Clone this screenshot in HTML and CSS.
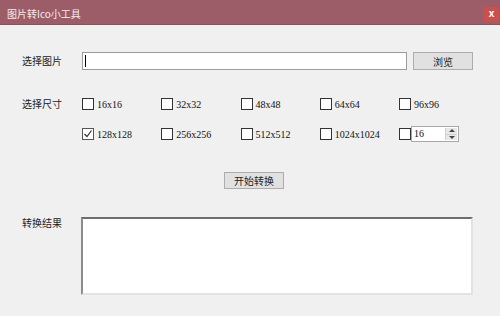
FILE: index.html
```html
<!DOCTYPE html>
<html lang="zh-CN">
<head>
<meta charset="UTF-8">
<meta name="viewport" content="width=device-width, initial-scale=1.0">
<title>图片转Ico小工具</title>
<link rel="stylesheet" href="styles.css">
</head>
<body>

<div class="window">
  <!-- Title bar -->
  <header class="titlebar">
    <span class="title">图片转Ico小工具</span>
    <span class="close">x</span>
  </header>

  <main class="content">
    <div class="row row-file">
      <span class="label">选择图片</span>
      <div class="path"><span class="caret"></span></div>
      <button class="btn btn-browse">浏览</button>
    </div>

    <div class="row row-sizes">
      <span class="label">选择尺寸</span>
      <div class="sizes">
        <label class="size"><span class="box"></span>16x16</label>
        <label class="size"><span class="box"></span>32x32</label>
        <label class="size"><span class="box"></span>48x48</label>
        <label class="size"><span class="box"></span>64x64</label>
        <label class="size"><span class="box"></span>96x96</label>
        <label class="size"><span class="box checked"><svg width="10" height="10" viewBox="0 0 10 10"><polyline points="1.5,5 4,7.5 8.5,1.5" fill="none" stroke="#333" stroke-width="1.2"/></svg></span>128x128</label>
        <label class="size"><span class="box"></span>256x256</label>
        <label class="size"><span class="box"></span>512x512</label>
        <label class="size"><span class="box"></span>1024x1024</label>
        <div class="size">
          <span class="box"></span>
          <div class="spin">
            <span class="spin-value">16</span>
            <span class="spin-arrows">
              <span class="arrow up"></span>
              <span class="arrow down"></span>
            </span>
          </div>
        </div>
      </div>
    </div>

    <div class="row-action">
      <button class="btn btn-start">开始转换</button>
    </div>

    <div class="row row-result">
      <span class="label">转换结果</span>
      <div class="result"></div>
    </div>
  </main>
</div>

</body>
</html>
```

FILE: styles.css
```css
/* Small WinForms-like tool window */
body {
  margin: 0;
  padding: 0;
  background-color: #f0f0f0;
  font-family: "Noto Sans CJK SC", "Liberation Sans", sans-serif;
  font-size: 10px;
  color: #222;
}
.window {
  width: 500px;
  height: 316px;
  overflow: hidden;
}
.titlebar {
  height: 24px;
  display: flex;
  align-items: center;
  justify-content: space-between;
  padding: 0 1px 0 7px;
  background-color: #9c5c68;
  border-bottom: 1px solid #8e4f5b;
}
.title {
  color: #f6eef0;
  font-size: 10px;
  line-height: 12px;
  margin-top: 3px;
}
.close {
  align-self: flex-start;
  width: 15px;
  height: 15px;
  margin-top: 7px;
  background-color: #c8504f;
  color: #fff;
  font-family: "Liberation Sans", sans-serif;
  font-weight: bold;
  font-size: 10px;
  line-height: 14px;
  text-align: center;
}
.content {
  padding: 27px 0 0 22px;
}
.row {
  display: flex;
  align-items: center;
}
.label {
  width: 60px;
  flex: none;
  line-height: 16px;
}
.path {
  width: 325px;
  height: 18px;
  box-sizing: border-box;
  border: 1px solid #9c9c9c;
  background-color: #fff;
  display: flex;
  align-items: center;
}
.caret {
  width: 1px;
  height: 12px;
  margin-left: 2px;
  background-color: #000;
}
.btn {
  font-family: "Noto Sans CJK SC", "Liberation Sans", sans-serif;
  font-size: 10px;
  color: #222;
  background-color: #e1e1e1;
  border: 1px solid #adadad;
  padding: 0;
  width: 60px;
}
.btn-browse {
  height: 18px;
  margin-left: 6px;
}
.row-sizes {
  margin-top: 26px;
  align-items: flex-start;
}
.sizes {
  display: grid;
  grid-template-columns: repeat(5, 79.25px);
  grid-auto-rows: 16px;
  row-gap: 14px;
}
.size {
  display: flex;
  align-items: center;
  font-family: "Liberation Serif", serif;
  font-size: 10px;
  color: #111;
}
.box {
  width: 12px;
  height: 12px;
  box-sizing: border-box;
  border: 1px solid #333;
  background-color: #fff;
  margin-right: 3px;
  display: flex;
  align-items: center;
  justify-content: center;
}
.box.checked {
  border-color: #555;
}
.spin {
  width: 48px;
  height: 16px;
  box-sizing: border-box;
  margin-left: -3px;
  border: 1px solid #a8a8a8;
  background-color: #fff;
  display: flex;
  justify-content: space-between;
}
.spin-value {
  padding-left: 2px;
  line-height: 13px;
}
.spin-arrows {
  width: 11px;
  margin: 1px;
  display: flex;
  flex-direction: column;
  background-color: #e8e8e8;
  border-left: 1px solid #d0d0d0;
}
.arrow {
  flex: 1;
  display: flex;
  align-items: center;
  justify-content: center;
}
.arrow::before {
  content: "";
  border-left: 3px solid transparent;
  border-right: 3px solid transparent;
}
.arrow.up {
  border-bottom: 1px solid #d0d0d0;
}
.arrow.up::before {
  border-bottom: 3px solid #444;
}
.arrow.down::before {
  border-top: 3px solid #444;
}
.row-action {
  margin-top: 30px;
  padding-left: 202px;
}
.btn-start {
  height: 17px;
}
.row-result {
  margin-top: 28px;
  align-items: flex-start;
}
.row-result .label {
  width: 59px;
  line-height: 11px;
}
.result {
  width: 392px;
  height: 78px;
  box-sizing: border-box;
  background-color: #fff;
  border-style: solid;
  border-width: 2px 2px 2px 2px;
  border-color: #6e6e6e #e3e3e3 #e3e3e3 #8c8c8c;
}
```
